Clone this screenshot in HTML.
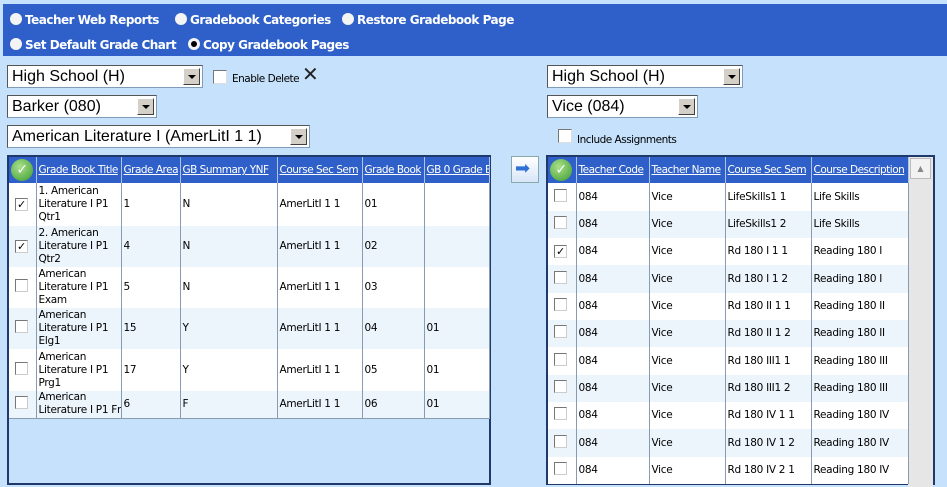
<!DOCTYPE html>
<html><head><meta charset="utf-8"><style>
*{box-sizing:border-box;margin:0;padding:0}
body{width:947px;height:482px;overflow:hidden;background:#c6e1fb;font-family:"DejaVu Sans","Liberation Sans",sans-serif;position:relative}
.bar{position:absolute;left:3px;top:4px;width:944px;height:52px;background:#2f60c9}
.rad{position:absolute;color:#fff;font-weight:bold;font-size:12px;white-space:nowrap;letter-spacing:-.5px}
.rad i{display:inline-block;width:12px;height:12px;border-radius:50%;background:#f4f4f4;vertical-align:-1px;margin-right:3px;position:relative}
.rad i.on::after{content:"";position:absolute;left:3px;top:3px;width:6px;height:6px;border-radius:50%;background:#000}
.sel{position:absolute;height:23px;background:#fff;border:1px solid #7f9db9;border-top-color:#555;border-left-color:#555;font-family:"Liberation Sans",sans-serif;font-size:16px;line-height:22px;padding-left:4px;color:#000}
.sel b{position:absolute;right:2px;top:2px;width:17px;height:17px;background:#d4d0c8;border:1px solid #fff;border-right-color:#404040;border-bottom-color:#404040}
.sel b::after{content:"";position:absolute;left:4px;top:6px;border-left:4px solid transparent;border-right:4px solid transparent;border-top:4px solid #000}
.cb{position:absolute;width:14px;height:14px;background:#fff;border:1px solid #777;border-right-color:#ddd;border-bottom-color:#ddd}
.small{position:absolute;font-size:10.5px;font-family:"DejaVu Sans",sans-serif;letter-spacing:-.5px}
table{position:absolute;border-collapse:collapse;table-layout:fixed;font-size:10.5px;letter-spacing:-.3px}
th{background:#2f60c9;color:#fff;font-weight:normal;text-decoration:underline;text-align:left;height:26px;border-right:1px solid #b0c4e8;white-space:nowrap;overflow:hidden;padding-left:2px;letter-spacing:-.5px}
td{border-right:1px solid #8a9ab0;vertical-align:middle;padding-left:2px;line-height:13px;overflow:hidden;white-space:nowrap}
tr.a td{background:#fff} tr.b td{background:#ecf4fc}
.ck{display:inline-block;width:13px;height:13px;border:1px solid #777;border-right-color:#ccc;border-bottom-color:#ccc;background:#fff;margin-left:6px;position:relative;font-size:11px;line-height:11px;text-align:center}
.gchk{display:inline-block;width:22px;height:22px;border-radius:50%;background:radial-gradient(circle at 40% 35%,#a8e08a,#3c9a2e);color:#fff;font-size:14px;line-height:22px;text-align:center;font-weight:bold}
</style></head><body>
<div class="bar"></div>
<div class="rad" style="left:10px;top:13px"><i></i>Teacher Web Reports</div>
<div class="rad" style="left:175px;top:13px"><i></i>Gradebook Categories</div>
<div class="rad" style="left:342px;top:13px"><i></i>Restore Gradebook Page</div>
<div class="rad" style="left:10px;top:38px"><i></i>Set Default Grade Chart</div>
<div class="rad" style="left:188px;top:38px"><i class="on"></i>Copy Gradebook Pages</div>

<div class="sel" style="left:7px;top:65px;width:196px">High School (H)<b></b></div>
<div class="cb" style="left:213px;top:70px"></div>
<div class="small" style="left:232px;top:73px">Enable Delete</div>
<div style="position:absolute;left:302px;top:62px;font-size:20px;font-family:'DejaVu Sans';color:#222">✕</div>
<div class="sel" style="left:7px;top:95px;width:150px">Barker (080)<b></b></div>
<div class="sel" style="left:7px;top:125px;width:303px">American Literature I (AmerLitI 1 1)<b></b></div>

<div class="sel" style="left:547px;top:65px;width:196px">High School (H)<b></b></div>
<div class="sel" style="left:547px;top:95px;width:151px">Vice (084)<b></b></div>
<div class="cb" style="left:558px;top:129px"></div>
<div class="small" style="left:577px;top:134px">Include Assignments</div>

<div style="position:absolute;left:7px;top:155px;width:484px;height:330px;border:2px solid #1f3a6a;background:#c6e1fb"></div>
<table style="left:9px;top:157px;width:480px">
<colgroup><col style="width:27px"><col style="width:85px"><col style="width:59px"><col style="width:97px"><col style="width:85px"><col style="width:62px"><col style="width:65px"></colgroup>
<tr><th style="padding:0 0 0 2px"><span class="gchk">✓</span></th><th>Grade Book Title</th><th>Grade Area</th><th>GB Summary YNF</th><th>Course Sec Sem</th><th>Grade Book</th><th>GB 0 Grade Book</th></tr>
<tr class="a" style="height:43px"><td style="padding:0"><span class="ck">✓</span></td><td>1. American<br>Literature I P1<br>Qtr1</td><td>1</td><td>N</td><td>AmerLitI 1 1</td><td>01</td><td></td></tr>
<tr class="b" style="height:41px"><td style="padding:0"><span class="ck">✓</span></td><td>2. American<br>Literature I P1<br>Qtr2</td><td>4</td><td>N</td><td>AmerLitI 1 1</td><td>02</td><td></td></tr>
<tr class="a" style="height:41px"><td style="padding:0"><span class="ck"></span></td><td>American<br>Literature I P1<br>Exam</td><td>5</td><td>N</td><td>AmerLitI 1 1</td><td>03</td><td></td></tr>
<tr class="b" style="height:41px"><td style="padding:0"><span class="ck"></span></td><td>American<br>Literature I P1<br>Elg1</td><td>15</td><td>Y</td><td>AmerLitI 1 1</td><td>04</td><td>01</td></tr>
<tr class="a" style="height:42px"><td style="padding:0"><span class="ck"></span></td><td>American<br>Literature I P1<br>Prg1</td><td>17</td><td>Y</td><td>AmerLitI 1 1</td><td>05</td><td>01</td></tr>
<tr class="b" style="height:27px;border-bottom:1px solid #8a9ab0"><td style="padding:0"><span class="ck"></span></td><td>American<br>Literature I P1 Fn</td><td>6</td><td>F</td><td>AmerLitI 1 1</td><td>06</td><td>01</td></tr>
</table>

<div style="position:absolute;left:511px;top:156px;width:28px;height:27px;background:linear-gradient(#fff,#d8e6f8);border:1px solid #8aa;"></div>
<div style="position:absolute;left:515px;top:158px;font-size:18px;color:#2f6fd8">➡</div>

<div style="position:absolute;left:546px;top:155px;width:389px;height:330px;border:2px solid #1f3a6a;background:#fff"></div>
<div style="position:absolute;left:908px;top:157px;width:25px;height:330px;background:#e6e6e6"></div>
<div style="position:absolute;left:910px;top:158px;width:21px;height:21px;background:#f2f2f2;border:1px solid #bbb;font-size:8px;color:#888;text-align:center;line-height:19px">▲</div>
<table style="left:548px;top:157px;width:360px">
<colgroup><col style="width:28px"><col style="width:73px"><col style="width:76px"><col style="width:86px"><col style="width:97px"></colgroup>
<tr><th style="padding:0 0 0 2px"><span class="gchk">✓</span></th><th>Teacher Code</th><th>Teacher Name</th><th>Course Sec Sem</th><th>Course Description</th></tr>
<tr class="a" style="height:28px"><td style="padding:0"><span class="ck"></span></td><td>084</td><td>Vice</td><td>LifeSkills1 1</td><td>Life Skills</td></tr>
<tr class="b" style="height:27px"><td style="padding:0"><span class="ck"></span></td><td>084</td><td>Vice</td><td>LifeSkills1 2</td><td>Life Skills</td></tr>
<tr class="a" style="height:27px"><td style="padding:0"><span class="ck">✓</span></td><td>084</td><td>Vice</td><td>Rd 180 I 1 1</td><td>Reading 180 I</td></tr>
<tr class="b" style="height:28px"><td style="padding:0"><span class="ck"></span></td><td>084</td><td>Vice</td><td>Rd 180 I 1 2</td><td>Reading 180 I</td></tr>
<tr class="a" style="height:27px"><td style="padding:0"><span class="ck"></span></td><td>084</td><td>Vice</td><td>Rd 180 II 1 1</td><td>Reading 180 II</td></tr>
<tr class="b" style="height:27px"><td style="padding:0"><span class="ck"></span></td><td>084</td><td>Vice</td><td>Rd 180 II 1 2</td><td>Reading 180 II</td></tr>
<tr class="a" style="height:28px"><td style="padding:0"><span class="ck"></span></td><td>084</td><td>Vice</td><td>Rd 180 III1 1</td><td>Reading 180 III</td></tr>
<tr class="b" style="height:27px"><td style="padding:0"><span class="ck"></span></td><td>084</td><td>Vice</td><td>Rd 180 III1 2</td><td>Reading 180 III</td></tr>
<tr class="a" style="height:27px"><td style="padding:0"><span class="ck"></span></td><td>084</td><td>Vice</td><td>Rd 180 IV 1 1</td><td>Reading 180 IV</td></tr>
<tr class="b" style="height:28px"><td style="padding:0"><span class="ck"></span></td><td>084</td><td>Vice</td><td>Rd 180 IV 1 2</td><td>Reading 180 IV</td></tr>
<tr class="a" style="height:27px"><td style="padding:0"><span class="ck"></span></td><td>084</td><td>Vice</td><td>Rd 180 IV 2 1</td><td>Reading 180 IV</td></tr>
</table>
</body></html>
